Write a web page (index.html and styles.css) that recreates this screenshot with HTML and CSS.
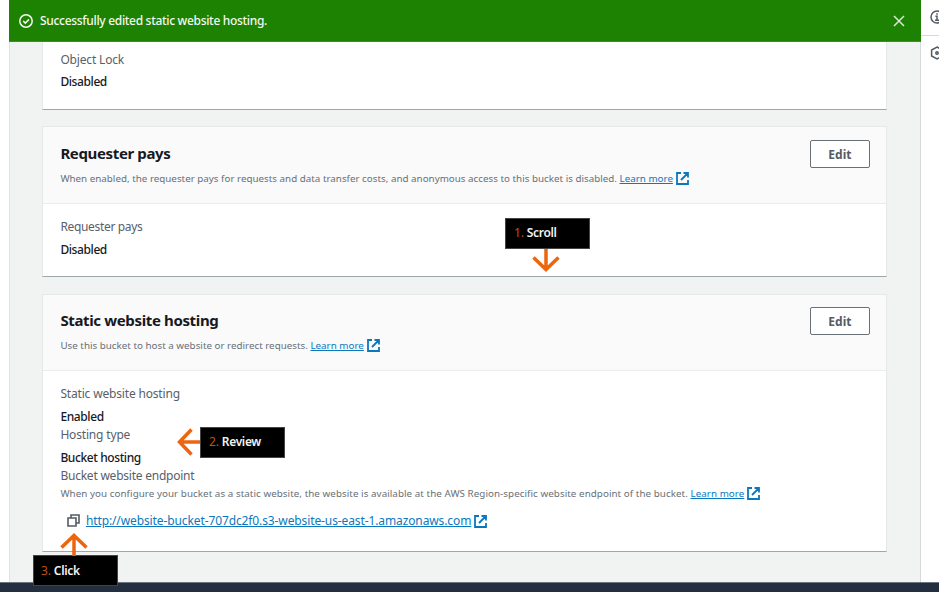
FILE: index.html
```html
<!DOCTYPE html>
<html lang="en">
<head>
<meta charset="utf-8">
<title>Static website hosting</title>
<link rel="stylesheet" href="styles.css">
</head>
<body>
<svg class="defs" width="0" height="0">
  <symbol id="external" viewBox="0 0 13 13"><path d="M5 1H1v11h11V8M7.5 1H12v4.5M12 1L5 8" fill="none" stroke="currentColor" stroke-width="1.8"/></symbol>
  <symbol id="arrow" viewBox="0 0 28 24"><path d="M14 0v20M1.500 8.500l12.500 12L26.500 8.500" fill="none" stroke="#ec660f" stroke-width="3.5"/></symbol>
</svg>
<div class="page">
  <div class="workspace">
    <main class="content">
      <div class="flash">
        <svg class="check" viewBox="0 0 14 14"><circle cx="7" cy="7" r="6.2"/><path d="M4.2 7l2.1 2.1 3.7-3.7"/></svg>
        <span class="flash-text">Successfully edited static website hosting.</span>
        <svg class="close" viewBox="0 0 12 12"><path d="M1 1l10 10M11 1L1 11"/></svg>
      </div>
      <section class="card card-lock">
        <div class="body">
          <div class="label">Object Lock</div>
          <div class="value">Disabled</div>
        </div>
      </section>
      <section class="card card-pays">
        <header class="head">
          <div class="intro">
            <h2>Requester pays</h2>
            <p class="desc">When enabled, the requester pays for requests and data transfer costs, and anonymous access to this bucket is disabled. <a class="link">Learn more<svg><use href="#external"/></svg></a></p>
          </div>
          <button class="edit">Edit</button>
        </header>
        <div class="body">
          <div class="label narrow">Requester pays</div>
          <div class="value">Disabled</div>
        </div>
      </section>
      <section class="card card-hosting">
        <header class="head">
          <div class="intro">
            <h2>Static website hosting</h2>
            <p class="desc">Use this bucket to host a website or redirect requests. <a class="link">Learn more<svg><use href="#external"/></svg></a></p>
          </div>
          <button class="edit">Edit</button>
        </header>
        <div class="body">
          <div class="label">Static website hosting</div>
          <div class="value">Enabled</div>
          <div class="label">Hosting type</div>
          <div class="value">Bucket hosting</div>
          <div class="label tight">Bucket website endpoint</div>
          <p class="desc wide">When you configure your bucket as a static website, the website is available at the AWS Region-specific website endpoint of the bucket. <a class="link">Learn more<svg><use href="#external"/></svg></a></p>
          <div class="endpoint">
            <svg class="copy" viewBox="0 0 13 13"><path d="M1 4h8v8H1zM4 4V1h8v8H9"/></svg>
            <a class="link">http://website-bucket-707dc2f0.s3-website-us-east-1.amazonaws.com<svg><use href="#external"/></svg></a>
          </div>
        </div>
      </section>
    </main>
    <aside class="rail">
      <div class="rail-item"><svg viewBox="0 0 14 14"><circle cx="7" cy="7" r="6"/><path d="M7 3.2v1.6M5.4 6.3H7v3.8M5 10.2h4"/></svg></div>
      <div class="rail-item"><svg viewBox="0 0 14 14"><path d="M7 1l5.4 3v6L7 13l-5.4-3V4z"/><circle cx="7" cy="7" r="1.2"/></svg></div>
    </aside>
  </div>
  <footer class="footer"></footer>
</div>
<div class="callout scroll"><b>1.</b> Scroll<svg><use href="#arrow"/></svg></div>
<div class="callout review"><b>2.</b> Review<svg><use href="#arrow"/></svg></div>
<div class="callout click"><b>3.</b> Click<svg><use href="#arrow"/></svg></div>
</body>
</html>
```
FILE: styles.css
```css
* { box-sizing: border-box; }
body { margin: 0; font-family: "Noto Sans", sans-serif; font-size: 12px; color: #16191f; background: #fff; }
.defs { position: absolute; }
.page { width: 939px; height: 592px; display: flex; flex-direction: column; overflow: hidden; }
.workspace { flex: 1; display: flex; min-height: 0; padding-left: 9px; }
.content { width: 912px; background: #f1f3f3; border-left: 1px solid #dfe3e3; border-right: 1px solid #d5d9d9; }
.flash { height: 42px; margin: 0 -1px; padding: 0 16px 0 10px; display: flex; align-items: center; background: #1d8102; color: #f4f8f2; border-bottom: 1px solid #3f8a34; }
.check { width: 14px; height: 14px; fill: none; stroke: #f4f8f2; stroke-width: 1.5; margin-right: 7px; }
.flash-text { flex: 1; font-weight: 500; letter-spacing: -0.31px; }
.close { width: 12px; height: 12px; stroke: #d9ead4; stroke-width: 1.5; }
.card { width: 845px; margin: 0 0 16px 32.4px; background: #fff; border: 1px solid #e4e8e8; border-bottom-color: #9ba7a9; }
.card-lock { height: 68px; border-top: 0; }
.card-lock .body { padding-top: 9px; }
.card-lock .label { margin-bottom: 3px; }
.card-pays { height: 151px; }
.card-hosting { height: 258px; margin-top: 17px; }
.head { height: 77px; background: #fafafa; border-bottom: 1px solid #eaeded; display: flex; justify-content: space-between; padding: 13px 16px 0 17px; }
.card-hosting .head { height: 76px; padding-top: 12px; }
h2 { margin: 2px 0 6px; font-size: 15px; line-height: 22px; font-weight: 700; letter-spacing: -0.36px; }
.desc { margin: 0; font-size: 9.8px; line-height: 18px; color: #687078; white-space: nowrap; letter-spacing: 0.01px; }
.desc.wide { letter-spacing: 0.06px; }
.link { color: #0b78bd; text-decoration: underline; }
.link svg { width: 13px; height: 13px; margin-left: 3px; vertical-align: -3px; }
.edit { width: 60px; height: 28px; padding: 0 1px 0 0; border: 1px solid #687078; border-radius: 2px; background: #fff; color: #545b64; font: 700 12px "Noto Sans", sans-serif; }
.body { padding: 14px 17px 0; }
.label { line-height: 18px; margin-bottom: 4px; color: #596069; letter-spacing: -0.17px; }
.label.narrow { letter-spacing: -0.33px; }
.label.tight { margin-bottom: 0; letter-spacing: -0.23px; }
.value { line-height: 19px; font-weight: 500; letter-spacing: -0.4px; }
.endpoint { display: flex; align-items: center; height: 19px; margin-top: 7.5px; padding-left: 6.5px; letter-spacing: -0.11px; }
.copy { width: 13px; height: 13px; margin-right: 6px; fill: none; stroke: #545b64; stroke-width: 1.6; }
.rail { width: 18px; overflow: hidden; }
.rail-item { height: 35px; padding: 10px 0 0 9px; }
.rail-item + .rail-item { border-top: 1px solid #d5d9d9; }
.rail svg { width: 14px; height: 14px; fill: none; stroke: #545b64; stroke-width: 1.5; }
.footer { height: 10px; background: #232f3e; border-top: 1px solid #6c757d; }
.callout { position: absolute; width: 85px; height: 31px; padding-left: 8px; background: #000; color: #f2f2f2; font-weight: 600; line-height: 28px; letter-spacing: -0.35px; border: 1px solid #444; }
.callout b { color: #c2500f; font-weight: 400; letter-spacing: 0; }
.callout svg { position: absolute; width: 28px; height: 24px; overflow: visible; }
.scroll { left: 505px; top: 218px; }
.scroll svg { left: 26px; top: 30px; }
.review { left: 200px; top: 427px; }
.review svg { left: -27px; top: 2px; transform: rotate(90deg); }
.click { left: 33px; top: 555px; padding-left: 7px; line-height: 29px; }
.click svg { left: 26px; top: -24px; transform: rotate(180deg); }
```
